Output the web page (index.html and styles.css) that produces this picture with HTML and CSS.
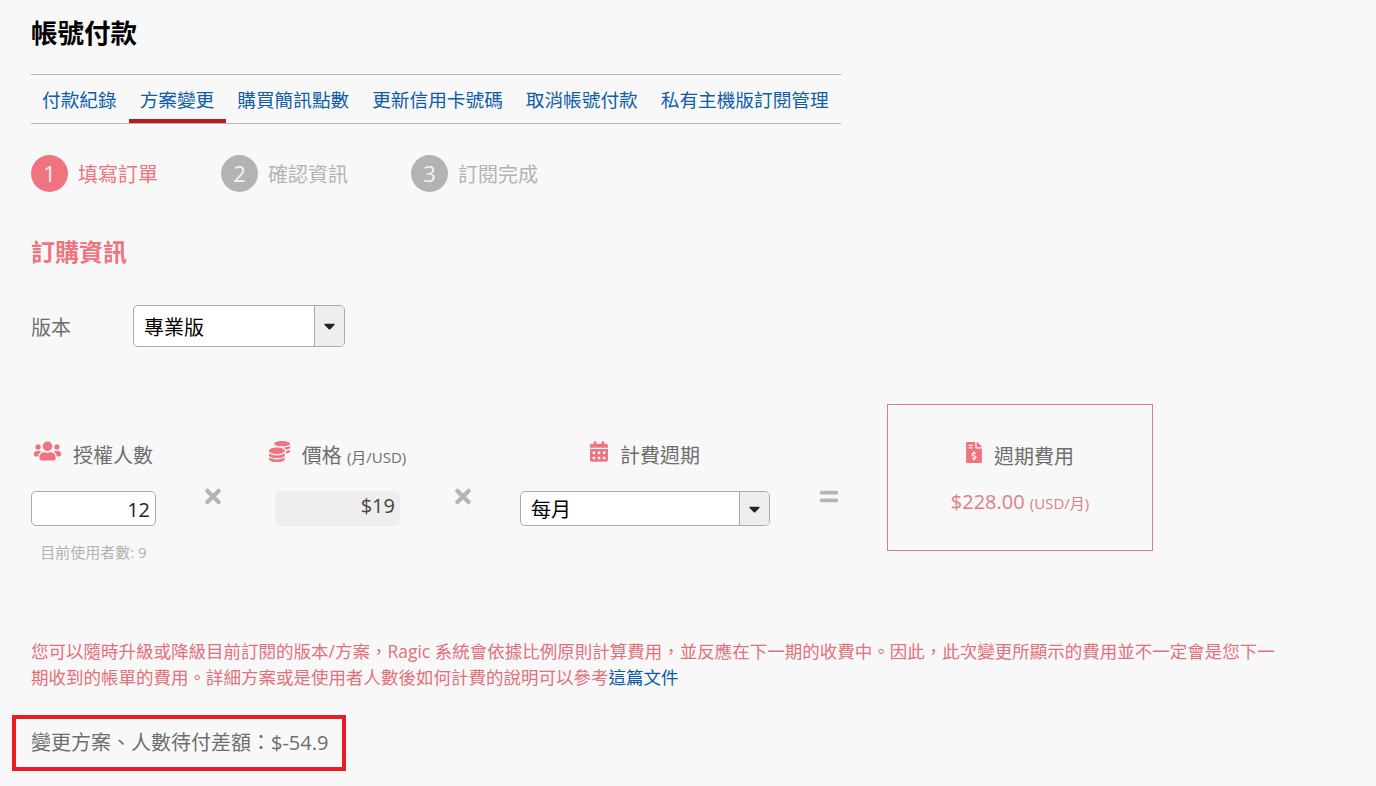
FILE: index.html
```html
<!DOCTYPE html>
<html lang="zh-Hant">
<head>
    <meta charset="UTF-8">
    <meta name="viewport" content="width=device-width, initial-scale=1.0">
    <title>帳號付款</title>
    <link rel="stylesheet" href="styles.css">
</head>
<body>
<div class="page">
    <h1 class="page-title">帳號付款</h1>

    <!-- Tabs -->
    <nav class="tabs">
        <a class="tab">付款紀錄</a>
        <a class="tab active">方案變更</a>
        <a class="tab">購買簡訊點數</a>
        <a class="tab">更新信用卡號碼</a>
        <a class="tab">取消帳號付款</a>
        <a class="tab">私有主機版訂閱管理</a>
    </nav>

    <!-- Steps -->
    <div class="steps">
        <div class="step current"><span class="step-num">1</span><span>填寫訂單</span></div>
        <div class="step"><span class="step-num">2</span><span>確認資訊</span></div>
        <div class="step"><span class="step-num">3</span><span>訂閱完成</span></div>
    </div>

    <h2 class="section-title">訂購資訊</h2>

    <div class="plan-row">
        <span class="plan-label">版本</span>
        <div class="combo plan-combo">
            <span class="combo-value">專業版</span>
            <span class="combo-arrow">
                <svg class="caret" viewBox="0 0 320 512"><path d="M31.3 192h257.3c17.8 0 26.7 21.5 14.1 34.1L174.1 354.8c-7.8 7.8-20.5 7.8-28.3 0L17.2 226.1C4.6 213.5 13.5 192 31.3 192z"/></svg>
            </span>
        </div>
    </div>

    <!-- Price calculation -->
    <div class="calc">
        <div class="calc-col">
            <div class="calc-label">
                <svg class="icon icon-users" viewBox="0 0 640 512"><path d="M96 224c35.3 0 64-28.7 64-64s-28.7-64-64-64-64 28.7-64 64 28.7 64 64 64zm448 0c35.3 0 64-28.7 64-64s-28.7-64-64-64-64 28.7-64 64 28.7 64 64 64zm32 32h-64c-17.6 0-33.5 7.1-45.1 18.6 40.3 22.1 68.9 62 75.1 109.4h66c17.7 0 32-14.3 32-32v-32c0-35.3-28.7-64-64-64zm-256 0c61.9 0 112-50.1 112-112S381.9 32 320 32 208 82.1 208 144s50.1 112 112 112zm76.8 32h-8.3c-20.8 10-43.9 16-68.5 16s-47.6-6-68.5-16h-8.3C179.6 288 128 339.6 128 403.2V432c0 26.5 21.5 48 48 48h288c26.5 0 48-21.5 48-48v-28.8c0-63.6-51.6-115.2-115.2-115.2zm-223.7-13.4C161.5 263.1 145.6 256 128 256H64c-35.3 0-64 28.7-64 64v32c0 17.7 14.3 32 32 32h65.9c6.3-47.4 34.9-87.3 75.2-109.4z"/></svg>
                <span>授權人數</span>
            </div>
            <div class="num-input">12</div>
            <div class="hint">目前使用者數: 9</div>
        </div>
        <div class="calc-op op-first">
            <svg class="op-icon op-times" viewBox="0 0 352 512"><path d="M242.72 256l100.07-100.07c12.28-12.28 12.28-32.19 0-44.48l-22.24-22.24c-12.28-12.28-32.19-12.28-44.48 0L176 189.28 75.93 89.21c-12.28-12.28-32.19-12.28-44.48 0L9.21 111.45c-12.28 12.28-12.28 32.19 0 44.48L109.28 256 9.21 356.07c-12.28 12.28-12.28 32.19 0 44.48l22.24 22.24c12.28 12.28 32.2 12.28 44.48 0L176 322.72l100.07 100.07c12.28 12.28 32.2 12.28 44.48 0l22.24-22.24c12.28-12.28 12.28-32.19 0-44.48L242.72 256z"/></svg>
        </div>
        <div class="calc-col">
            <div class="calc-label">
                <svg class="icon icon-coins" viewBox="0 0 512 512"><path d="M0 405.3V448c0 35.3 86 64 192 64s192-28.7 192-64v-42.7C342.7 434.4 267.2 448 192 448S41.3 434.4 0 405.3zM320 128c106 0 192-28.7 192-64S426 0 320 0 128 28.7 128 64s86 64 192 64zM0 300.4V352c0 35.3 86 64 192 64s192-28.7 192-64v-51.6c-41.3 34-116.9 51.6-192 51.6S41.3 334.4 0 300.4zm416 11c57.3-11.1 96-31.7 96-55.4v-42.7c-23.2 16.4-57.3 27.6-96 34.5v63.6zM192 160C86 160 0 195.8 0 240s86 80 192 80 192-35.8 192-80-86-80-192-80zm219.3 56.3c60-10.8 100.7-32 100.7-56.3v-42.7c-35.5 25.1-96.5 38.6-160.7 41.8 29.5 14.3 51.2 33.5 60 57.2z"/></svg>
                <span>價格 <small>(月/USD)</small></span>
            </div>
            <div class="price-box">$19</div>
        </div>
        <div class="calc-op op-second">
            <svg class="op-icon op-times" viewBox="0 0 352 512"><path d="M242.72 256l100.07-100.07c12.28-12.28 12.28-32.19 0-44.48l-22.24-22.24c-12.28-12.28-32.19-12.28-44.48 0L176 189.28 75.93 89.21c-12.28-12.28-32.19-12.28-44.48 0L9.21 111.45c-12.28 12.28-12.28 32.19 0 44.48L109.28 256 9.21 356.07c-12.28 12.28-12.28 32.19 0 44.48l22.24 22.24c12.28 12.28 32.2 12.28 44.48 0L176 322.72l100.07 100.07c12.28 12.28 32.2 12.28 44.48 0l22.24-22.24c12.28-12.28 12.28-32.19 0-44.48L242.72 256z"/></svg>
        </div>
        <div class="calc-col">
            <div class="calc-label">
                <svg class="icon icon-calendar" viewBox="0 0 448 512"><path d="M0 464c0 26.5 21.5 48 48 48h352c26.5 0 48-21.5 48-48V192H0v272zm320-196c0-6.6 5.4-12 12-12h40c6.6 0 12 5.4 12 12v40c0 6.6-5.4 12-12 12h-40c-6.6 0-12-5.4-12-12v-40zm0 128c0-6.6 5.4-12 12-12h40c6.6 0 12 5.4 12 12v40c0 6.6-5.4 12-12 12h-40c-6.6 0-12-5.4-12-12v-40zM192 268c0-6.6 5.4-12 12-12h40c6.6 0 12 5.4 12 12v40c0 6.6-5.4 12-12 12h-40c-6.6 0-12-5.4-12-12v-40zm0 128c0-6.6 5.4-12 12-12h40c6.6 0 12 5.4 12 12v40c0 6.6-5.4 12-12 12h-40c-6.6 0-12-5.4-12-12v-40zM64 268c0-6.6 5.4-12 12-12h40c6.6 0 12 5.4 12 12v40c0 6.6-5.4 12-12 12H76c-6.6 0-12-5.4-12-12v-40zm0 128c0-6.6 5.4-12 12-12h40c6.6 0 12 5.4 12 12v40c0 6.6-5.4 12-12 12H76c-6.6 0-12-5.4-12-12v-40zM400 64h-48V16c0-8.8-7.2-16-16-16h-32c-8.8 0-16 7.2-16 16v48H160V16c0-8.8-7.2-16-16-16h-32c-8.8 0-16 7.2-16 16v48H48C21.5 64 0 85.5 0 112v48h448v-48c0-26.5-21.5-48-48-48z"/></svg>
                <span>計費週期</span>
            </div>
            <div class="combo period-combo">
                <span class="combo-value">每月</span>
                <span class="combo-arrow">
                    <svg class="caret" viewBox="0 0 320 512"><path d="M31.3 192h257.3c17.8 0 26.7 21.5 14.1 34.1L174.1 354.8c-7.8 7.8-20.5 7.8-28.3 0L17.2 226.1C4.6 213.5 13.5 192 31.3 192z"/></svg>
                </span>
            </div>
        </div>
        <div class="calc-op">
            <svg class="op-icon op-equals" viewBox="0 0 448 512"><path d="M416 304H32c-17.67 0-32 14.33-32 32v32c0 17.67 14.33 32 32 32h384c17.67 0 32-14.33 32-32v-32c0-17.67-14.33-32-32-32zm0-192H32c-17.67 0-32 14.33-32 32v32c0 17.67 14.33 32 32 32h384c17.67 0 32-14.33 32-32v-32c0-17.67-14.33-32-32-32z"/></svg>
        </div>
        <div class="total-box">
            <div class="total-label">
                <svg class="icon icon-file" viewBox="0 0 384 512"><path d="M377 105L279.1 7c-4.5-4.5-10.6-7-17-7H256v128h128v-6.1c0-6.3-2.5-12.4-7-16.9zm-153 31V0H24C10.7 0 0 10.7 0 24v464c0 13.3 10.7 24 24 24h336c13.3 0 24-10.7 24-24V160H248c-13.2 0-24-10.8-24-24zM64 72c0-4.42 3.58-8 8-8h80c4.42 0 8 3.58 8 8v16c0 4.42-3.58 8-8 8H72c-4.42 0-8-3.58-8-8V72zm0 80v-16c0-4.42 3.58-8 8-8h80c4.42 0 8 3.58 8 8v16c0 4.42-3.58 8-8 8H72c-4.42 0-8-3.58-8-8zm144 263.88V440c0 4.42-3.58 8-8 8h-16c-4.42 0-8-3.58-8-8v-24.29c-11.29-.58-22.27-4.52-31.37-11.35-3.9-2.93-4.1-8.77-.57-12.14l11.75-11.21c2.77-2.64 6.89-2.76 10.13-.73 3.87 2.42 8.26 3.72 12.82 3.72h28.11c6.5 0 11.8-5.92 11.8-13.19 0-5.95-3.61-11.19-8.77-12.73l-45-13.5c-18.59-5.58-31.58-23.42-31.58-43.39 0-24.52 19.05-44.44 42.67-45.07V232c0-4.42 3.58-8 8-8h16c4.42 0 8 3.58 8 8v24.29c11.29.58 22.27 4.51 31.37 11.35 3.9 2.93 4.1 8.77.57 12.14l-11.75 11.21c-2.77 2.64-6.89 2.76-10.13.73-3.87-2.43-8.26-3.72-12.82-3.72h-28.11c-6.5 0-11.8 5.92-11.8 13.19 0 5.95 3.61 11.19 8.77 12.73l45 13.5c18.59 5.58 31.58 23.42 31.58 43.39 0 24.53-19.05 44.44-42.67 45.07z"/></svg>
                <span>週期費用</span>
            </div>
            <div class="total-amount">$228.00 <small>(USD/月)</small></div>
        </div>
    </div>

    <p class="note">您可以隨時升級或降級目前訂閱的版本/方案，Ragic 系統會依據比例原則計算費用，並反應在下一期的收費中。因此，此次變更所顯示的費用並不一定會是您下一期收到的帳單的費用。詳細方案或是使用者人數後如何計費的說明可以參考<a class="note-link">這篇文件</a></p>

    <div class="diff">變更方案、人數待付差額：$-54.9</div>
</div>
</body>
</html>
```

FILE: styles.css
```css
/* General */
html, body {
    margin: 0;
    padding: 0;
}

body {
    background: #f8f8f8;
    font-family: "Open Sans", "Noto Sans CJK TC", sans-serif;
    color: #6e6e6e;
    overflow: hidden;
}

.page {
    box-sizing: border-box;
    height: 786px;
    padding: 14px 0 0 31px;
}

/* Title */
.page-title {
    margin: 0;
    font-size: 26.5px;
    line-height: 38px;
    font-weight: 700;
    color: #000;
}

/* Tabs */
.tabs {
    box-sizing: border-box;
    display: flex;
    width: 810px;
    height: 50px;
    margin-top: 22px;
    border-top: 1px solid #b5b5b5;
    border-bottom: 1px solid #b5b5b5;
}

.tab {
    box-sizing: border-box;
    height: 48px;
    padding: 0 12px 0 11px;
    font-size: 18.67px;
    line-height: 49px;
    color: #0f5ca8;
    white-space: nowrap;
}

.tab.active {
    border-bottom: 4px solid #b71c1c;
}

/* Steps */
.steps {
    display: flex;
    margin-top: 31px;
}

.step {
    display: flex;
    align-items: center;
    gap: 10px;
    width: 190px;
    font-size: 20px;
    color: #b3b3b3;
}

.step-num {
    width: 37px;
    height: 37px;
    border-radius: 50%;
    background: #b3b3b3;
    color: #f4f4f4;
    font-size: 22px;
    line-height: 37px;
    text-align: center;
}

.step.current {
    color: #ee7480;
}

.step.current .step-num {
    background: #f27380;
}

/* Order section */
.section-title {
    margin: 42px 0 0;
    font-size: 24px;
    line-height: 36px;
    font-weight: 700;
    color: #ee7480;
}

.plan-row {
    display: flex;
    align-items: center;
    margin-top: 35px;
}

.plan-label {
    width: 102px;
    font-size: 20px;
}

/* Select look-alike */
.combo {
    box-sizing: border-box;
    display: flex;
    background: #fff;
    border: 1px solid #aaa;
    border-radius: 5px;
    color: #000;
    font-size: 20px;
}

.plan-combo {
    width: 212px;
    height: 42px;
}

.period-combo {
    width: 250px;
    height: 35px;
}

.combo-value {
    flex: 1;
    padding-left: 10px;
    align-self: center;
}

.combo-arrow {
    display: flex;
    align-items: center;
    justify-content: center;
    width: 29px;
    background: #eee;
    border-left: 1px solid #aaa;
    border-radius: 0 4px 4px 0;
}

.caret {
    width: 11px;
    height: 18px;
    fill: #222;
}

/* Price calculation */
.calc {
    display: grid;
    grid-template-columns: 125px 119px 125px 120px 250px 117px 266px;
    margin-top: 57px;
}

.calc-col {
    display: flex;
    flex-direction: column;
    align-items: center;
}

.calc-label {
    display: flex;
    justify-content: center;
    align-items: center;
    gap: 12px;
    width: 100%;
    height: 36px;
    margin-top: 32px;
    margin-bottom: 19px;
    font-size: 20px;
    white-space: nowrap;
}

.calc-label small,
.total-amount small {
    font-size: 15px;
}

.icon {
    flex: none;
    fill: #ee7480;
    margin-top: -6px;
}

.icon-users {
    width: 27px;
    height: 22px;
}

.icon-coins {
    width: 21px;
    height: 21px;
}

.icon-calendar {
    width: 18px;
    height: 21px;
}

.icon-file {
    width: 16px;
    height: 21px;
}

.num-input {
    box-sizing: border-box;
    width: 125px;
    height: 35px;
    padding-right: 5px;
    background: #fff;
    border: 1px solid #aaa;
    border-radius: 5px;
    color: #222;
    font-size: 20px;
    line-height: 35px;
    text-align: right;
}

.hint {
    margin-top: 16px;
    font-size: 15px;
    line-height: 20px;
    color: #b3b3b3;
}

.price-box {
    box-sizing: border-box;
    width: 125px;
    height: 35px;
    padding-right: 5px;
    background: #eee;
    border-radius: 5px;
    color: #444;
    font-size: 20px;
    line-height: 30px;
    text-align: right;
}

.calc-op {
    display: flex;
    justify-content: center;
    padding-top: 81px;
}

.op-first {
    padding-right: 6px;
}

.op-second {
    padding-left: 6px;
}

.op-icon {
    fill: #b5b5b5;
}

.op-times {
    width: 16px;
    height: 23px;
}

.op-equals {
    width: 18px;
    height: 23px;
}

.total-box {
    box-sizing: border-box;
    height: 147px;
    border: 1px solid #e07c86;
    text-align: center;
}

.total-label {
    display: flex;
    justify-content: center;
    align-items: center;
    gap: 12px;
    height: 36px;
    margin-top: 32px;
    font-size: 20px;
}

.total-amount {
    margin-top: 14px;
    font-size: 20px;
    line-height: 30px;
    color: #e07c86;
}

/* Note */
.note {
    width: 1250px;
    margin: 76px 0 0;
    font-size: 17.5px;
    line-height: 26px;
    color: #e3707b;
}

.note-link {
    color: #0b5aa5;
}

/* Outstanding difference */
.diff {
    box-sizing: border-box;
    width: 334px;
    height: 56px;
    margin: 25px 0 0 -19px;
    padding-left: 15px;
    border: 4px solid #ed1c24;
    font-size: 20px;
    line-height: 48px;
    white-space: nowrap;
}
```
